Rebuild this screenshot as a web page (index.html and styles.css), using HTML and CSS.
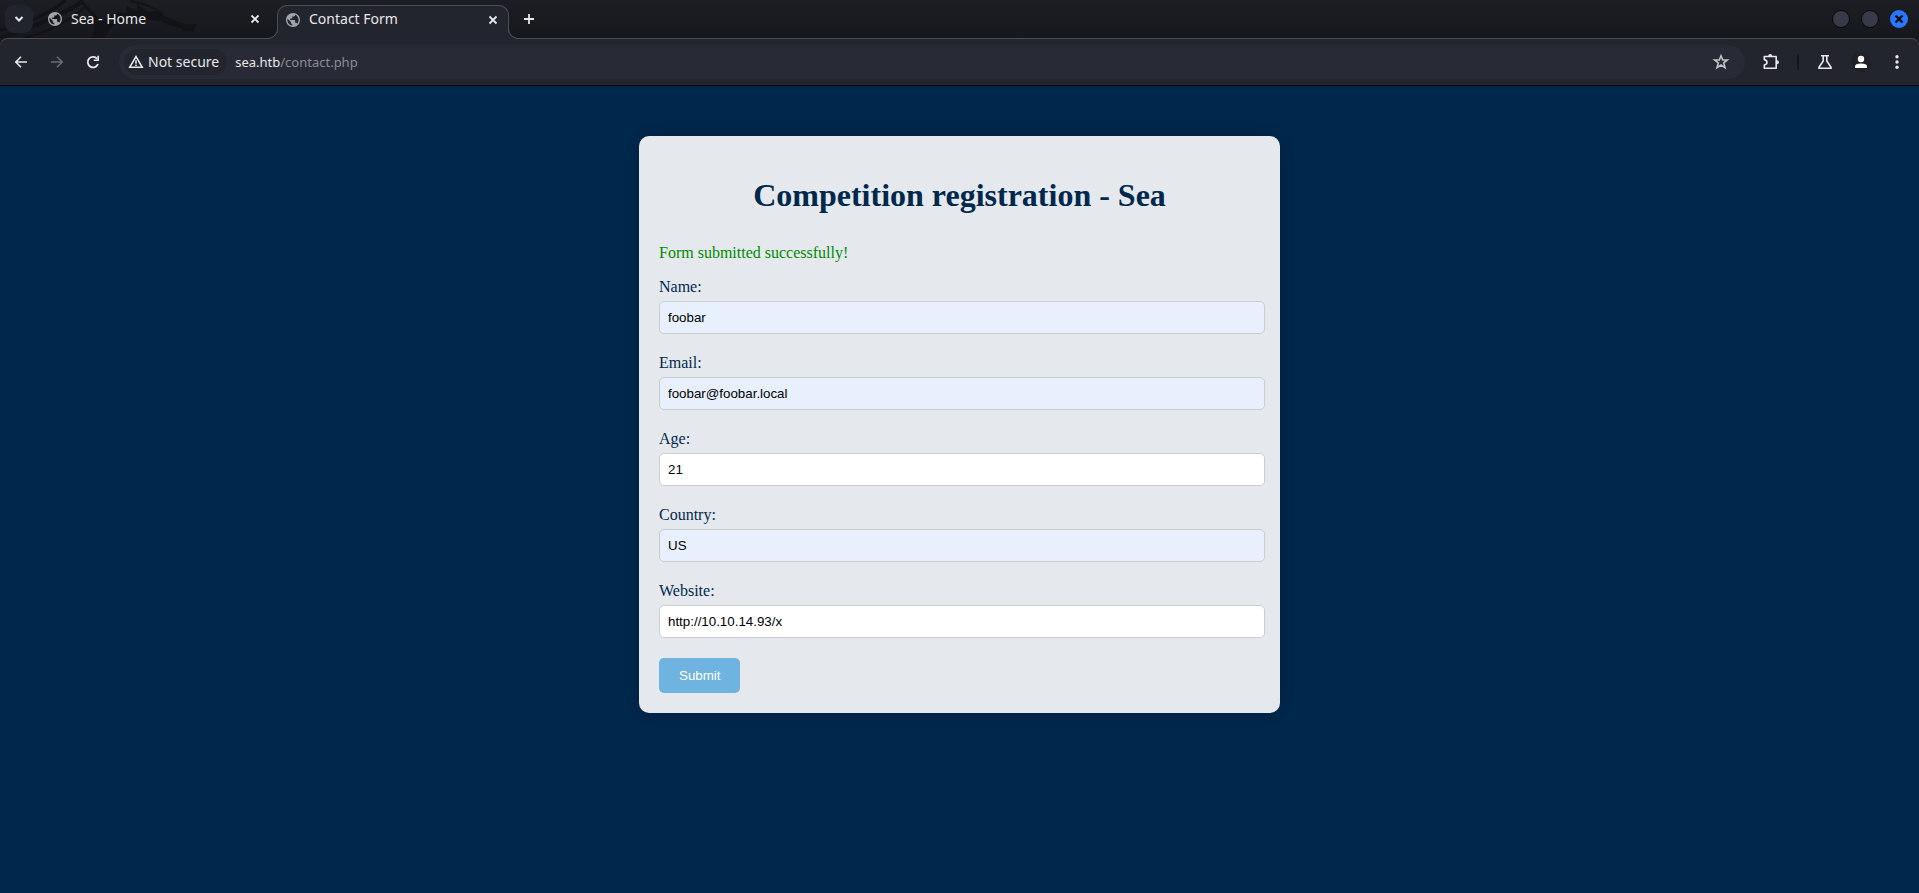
FILE: index.html
```
<!DOCTYPE html>
<html lang="en">
<head>
    <meta charset="UTF-8">
    <title>Contact Form</title>
    <link rel="stylesheet" href="styles.css">
</head>
<body>
    <header class="browser">
        <div class="tab-strip">
            <svg class="dragon" width="210" height="38" viewBox="0 0 210 38" aria-hidden="true">
                <g fill="none" stroke="#121317">
                    <path d="M0 30Q38 22 66 0" stroke-width="3"/>
                    <path d="M0 38Q50 22 82 2" stroke-width="4"/>
                    <path d="M22 38Q60 30 86 6" stroke-width="2"/>
                    <path d="M80 0L100 22" stroke-width="3"/>
                </g>
                <g fill="#121317">
                    <path d="M91 38Q97 26 93 16L103 21Q110 13 122 12L128 13Q124 9 127 5Q131 10 138 11Q136 7 138 4Q142 10 150 12L160 11L164 16L177 21L184 24L197 24L193 32L184 31L180 28L168 25L160 21Q146 18 137 20Q118 20 110 29L105 38Z"/>
                    <path d="M130 0Q148 2 166 15Q150 6 130 2Z"/>
                </g>
            </svg>
            <button class="tab-search" aria-label="Search tabs">
                <svg width="10" height="10" viewBox="0 0 10 10"><path d="M1.5 3L5 6.500L8.500 3" fill="none" stroke="currentColor" stroke-width="2"/></svg>
            </button>
            <div class="tab">
                <svg class="globe" width="14" height="14" viewBox="2 2 20 20"><path d="M12 2C6.480 2 2 6.480 2 12s4.480 10 10 10 10-4.480 10-10S17.520 2 12 2zm-1 17.930c-3.950-.49-7-3.850-7-7.930 0-.62.08-1.210.21-1.790L9 15v1c0 1.100.9 2 2 2v1.930zm6.900-2.540c-.26-.81-1-1.390-1.900-1.390h-1v-3c0-.55-.45-1-1-1H8v-2h2c.55 0 1-.45 1-1V7h2c1.100 0 2-.9 2-2v-.41c2.930 1.190 5 4.060 5 7.410 0 2.080-.8 3.970-2.100 5.390z"/></svg>
                <span class="tab-title">Sea - Home</span>
                <button class="icon-button" aria-label="Close tab"><svg width="10" height="10" viewBox="0 0 10 10"><path d="M1.500 1.500L8.500 8.500M8.500 1.500L1.500 8.500" stroke="currentColor" stroke-width="1.800"/></svg></button>
            </div>
            <div class="tab active">
                <svg class="globe" width="14" height="14" viewBox="2 2 20 20"><path d="M12 2C6.480 2 2 6.480 2 12s4.480 10 10 10 10-4.480 10-10S17.520 2 12 2zm-1 17.930c-3.950-.49-7-3.850-7-7.930 0-.62.08-1.210.21-1.790L9 15v1c0 1.100.9 2 2 2v1.930zm6.900-2.540c-.26-.81-1-1.390-1.900-1.390h-1v-3c0-.55-.45-1-1-1H8v-2h2c.55 0 1-.45 1-1V7h2c1.100 0 2-.9 2-2v-.41c2.930 1.190 5 4.060 5 7.410 0 2.080-.8 3.970-2.100 5.390z"/></svg>
                <span class="tab-title">Contact Form</span>
                <button class="icon-button" aria-label="Close tab"><svg width="10" height="10" viewBox="0 0 10 10"><path d="M1.500 1.500L8.500 8.500M8.500 1.500L1.500 8.500" stroke="currentColor" stroke-width="1.800"/></svg></button>
            </div>
            <button class="icon-button new-tab" aria-label="New tab"><svg width="12" height="12" viewBox="0 0 12 12"><path d="M6 1V11M1 6H11" stroke="currentColor" stroke-width="1.800"/></svg></button>
            <div class="window-buttons">
                <button class="window-button" aria-label="Minimize"></button>
                <button class="window-button" aria-label="Maximize"></button>
                <button class="window-button close" aria-label="Close"><svg width="10" height="10" viewBox="0 0 10 10"><path d="M1.500 1.500L8.500 8.500M8.500 1.500L1.500 8.500" stroke="currentColor" stroke-width="2.400"/></svg></button>
            </div>
        </div>

        <div class="toolbar">
            <div class="nav-buttons">
                <button class="icon-button" aria-label="Back"><svg width="16" height="16" viewBox="0 0 16 16"><path d="M14 8H3M8 2.800L2.800 8L8 13.200" fill="none" stroke="currentColor" stroke-width="1.600"/></svg></button>
                <button class="icon-button dim" aria-label="Forward"><svg width="16" height="16" viewBox="0 0 16 16"><path d="M2 8H13M8 2.800L13.200 8L8 13.200" fill="none" stroke="currentColor" stroke-width="1.600"/></svg></button>
                <button class="icon-button" aria-label="Reload"><svg width="16" height="16" viewBox="0 0 16 16"><path d="M13 10A5.300 5.300 0 1 1 12.200 4.800" fill="none" stroke="currentColor" stroke-width="1.800"/><path d="M14 1.800V7H8.800V5.400H12.400V1.800Z" fill="currentColor"/></svg></button>
            </div>
            <div class="omnibox">
                <button class="security">
                    <svg width="16" height="16" viewBox="0 0 16 16"><path d="M8 2.600L14.200 13.200H1.800Z" fill="none" stroke="currentColor" stroke-width="1.600"/><path d="M8 6.200V9.700M8 10.500V12" stroke="currentColor" stroke-width="1.500"/></svg>
                    <span>Not secure</span>
                </button>
                <div class="url">sea.htb<span>/contact.php</span></div>
                <button class="icon-button star" aria-label="Bookmark this tab"><svg width="18" height="18" viewBox="0 0 18 18"><path d="M9 2.800L10.700 7H15.300L11.700 9.900L13 14.600L9 12L5 14.600L6.300 9.900L2.700 7H7.300Z" fill="none" stroke="currentColor" stroke-width="1.600"/></svg></button>
            </div>
            <div class="actions">
                <button class="icon-button" aria-label="Extensions"><svg width="18" height="18" viewBox="0 0 18 18"><path d="M2.300 3.500H14.200V15.200H2.300V12Q5 11.500 5 9.300T2.300 6.600Z" fill="none" stroke="currentColor" stroke-width="1.600" stroke-linejoin="round"/><path d="M6.200 3.200Q6.200 1 8.200 1T10.200 3.200ZM14.500 7.300Q17 7.300 17 9.300T14.500 11.300Z" fill="currentColor"/></svg></button>
                <span class="divider"></span>
                <button class="icon-button" aria-label="Experiments"><svg width="16" height="16" viewBox="0 0 16 16"><path d="M4 1.800H12M6.200 2V7L2 13.200V14.200H14V13.200L9.800 7V2" fill="none" stroke="currentColor" stroke-width="1.600"/></svg></button>
                <button class="icon-button profile" aria-label="Profile"><svg width="20" height="20" viewBox="0 0 20 20"><circle cx="10" cy="10" r="10" fill="#202124"/><circle cx="10" cy="7" r="3.200" fill="#fff"/><path d="M4 16V14.500Q4 11.500 10 11.500T16 14.500V16Z" fill="#fff"/></svg></button>
                <button class="icon-button" aria-label="Menu"><svg width="16" height="16" viewBox="0 0 16 16" fill="currentColor"><circle cx="8" cy="2.800" r="1.700"/><circle cx="8" cy="8" r="1.700"/><circle cx="8" cy="13.200" r="1.700"/></svg></button>
            </div>
        </div>
    </header>

    <main class="container">
        <h1>Competition registration - Sea</h1>
        <p class="success">Form submitted successfully!</p>
        <form action="contact.php" method="post">
            <div class="form-group">
                <label for="name">Name:</label>
                <input class="filled" type="text" id="name" name="name" value="foobar">
            </div>
            <div class="form-group">
                <label for="email">Email:</label>
                <input class="filled" type="email" id="email" name="email" value="foobar@foobar.local">
            </div>
            <div class="form-group">
                <label for="age">Age:</label>
                <input type="number" id="age" name="age" value="21">
            </div>
            <div class="form-group">
                <label for="country">Country:</label>
                <input class="filled" type="text" id="country" name="country" value="US">
            </div>
            <div class="form-group">
                <label for="website">Website:</label>
                <input type="text" id="website" name="website" value="http://10.10.14.93/x">
            </div>
            <button class="submit" type="submit">Submit</button>
        </form>
    </main>
</body>
</html>
```
FILE: styles.css
```
body {
    margin: 0;
    background: #00284d;
    color: #00284d;
    font-family: "Liberation Serif", serif;
    font-size: 16px;
    line-height: 18px;
}

/* browser chrome */
.browser {
    background: #191a1f;
    color: #e8e8ea;
    font: 14px/20px "Noto Sans", sans-serif;
    border-bottom: 1px solid #08090c;
}
.browser button {
    font: inherit;
    color: inherit;
    border: none;
    padding: 0;
    background: none;
    display: flex;
    align-items: center;
    justify-content: center;
}
.tab-strip {
    display: flex;
    align-items: center;
    position: relative;
    height: 38px;
    background: linear-gradient(#1c1e24, #17181c);
}
.dragon {
    position: absolute;
    left: 0;
    top: 0;
}
.browser .tab-search {
    position: relative;
    width: 28px;
    height: 28px;
    margin-left: 5px;
    border-radius: 9px;
    background: #22242d;
}
.tab {
    position: relative;
    display: flex;
    align-items: center;
    box-sizing: border-box;
    width: 232px;
    height: 34px;
    padding: 0 6px 0 9px;
}
.tab:not(.active) {
    margin-left: 6px;
    margin-right: 6px;
}
.tab.active {
    align-self: flex-end;
    margin-bottom: -1px;
    padding: 0 5px 6px 8px;
    background: #23252e;
    border: 1px solid #4c4e56;
    border-bottom: none;
    border-radius: 10px 10px 0 0;
}
.tab.active::before,
.tab.active::after {
    content: "";
    position: absolute;
    bottom: 0;
    width: 10px;
    height: 10px;
    border-bottom: 1px solid #4c4e56;
}
.tab.active::before {
    left: -11px;
    border-right: 1px solid #4c4e56;
    border-radius: 0 0 10px 0;
    box-shadow: 3px 3px 0 #23252e;
}
.tab.active::after {
    right: -11px;
    border-left: 1px solid #4c4e56;
    border-radius: 0 0 0 10px;
    box-shadow: -3px 3px 0 #23252e;
}
.globe {
    fill: #9fa3ac;
}
.tab-title {
    flex: 1;
    margin-left: 9px;
    padding-bottom: 1px;
}
.browser .icon-button {
    width: 20px;
    height: 20px;
}
.browser .new-tab {
    margin-left: 10px;
}
.window-buttons {
    display: flex;
    gap: 11px;
    margin-left: auto;
    margin-right: 11px;
}
.browser .window-button {
    box-sizing: border-box;
    width: 18px;
    height: 18px;
    border: 1px solid #08090c;
    border-radius: 50%;
    background: #373b47;
}
.browser .window-button.close {
    border: none;
    background: #2777ff;
    color: #0b0c10;
}
.toolbar {
    display: flex;
    align-items: center;
    box-sizing: border-box;
    height: 47px;
    background: #23252e;
    border-top: 1px solid #4c4e56;
    border-radius: 8px 8px 0 0;
}
.nav-buttons {
    display: flex;
    gap: 16px;
    margin: 0 16px 0 11px;
}
.browser .dim {
    color: #6b6d75;
}
.omnibox {
    flex: 1;
    display: flex;
    align-items: center;
    box-sizing: border-box;
    height: 34px;
    padding: 0 14px 0 5px;
    border-radius: 17px;
    background: #282a35;
}
.browser .security {
    height: 26px;
    padding: 0 8px 0 4px;
    gap: 4px;
    border-radius: 13px;
    background: #23252e;
}
.url {
    flex: 1;
    margin-left: 8px;
    font-size: 13px;
}
.url span {
    color: #8b8d95;
}
.browser .star {
    color: #c3c4c8;
}
.actions {
    display: flex;
    align-items: center;
    gap: 16px;
    margin: 0 12px 0 16px;
}
.divider {
    width: 2px;
    height: 16px;
    background: #16171c;
}

/* contact form */
.container {
    max-width: 601px;
    margin: 50px auto;
    padding: 20px;
    background: #e5e9ed;
    border-radius: 10px;
    box-shadow: 0 0 20px rgba(0, 0, 0, 0.2);
}
h1 {
    margin: 21px 0 30px;
    font-size: 32px;
    line-height: 37px;
    text-align: center;
}
.success {
    margin: 0 0 16px;
    color: #008a00;
}
.form-group {
    margin-bottom: 20px;
}
.form-group label {
    display: block;
    margin-bottom: 5px;
}
.form-group input {
    display: block;
    width: calc(100% - 13px);
    height: 15px;
    padding: 8px;
    border: 1px solid #ccc;
    border-radius: 5px;
    background: #fff;
    color: #000;
    font-family: "Liberation Sans", sans-serif;
}
.form-group input.filled {
    background: #e8f0fe;
}
.submit {
    display: block;
    padding: 10px 20px;
    border: none;
    border-radius: 5px;
    background: #6fb3e0;
    color: #fff;
    font-family: "Liberation Sans", sans-serif;
    line-height: 15px;
    cursor: pointer;
}
```
